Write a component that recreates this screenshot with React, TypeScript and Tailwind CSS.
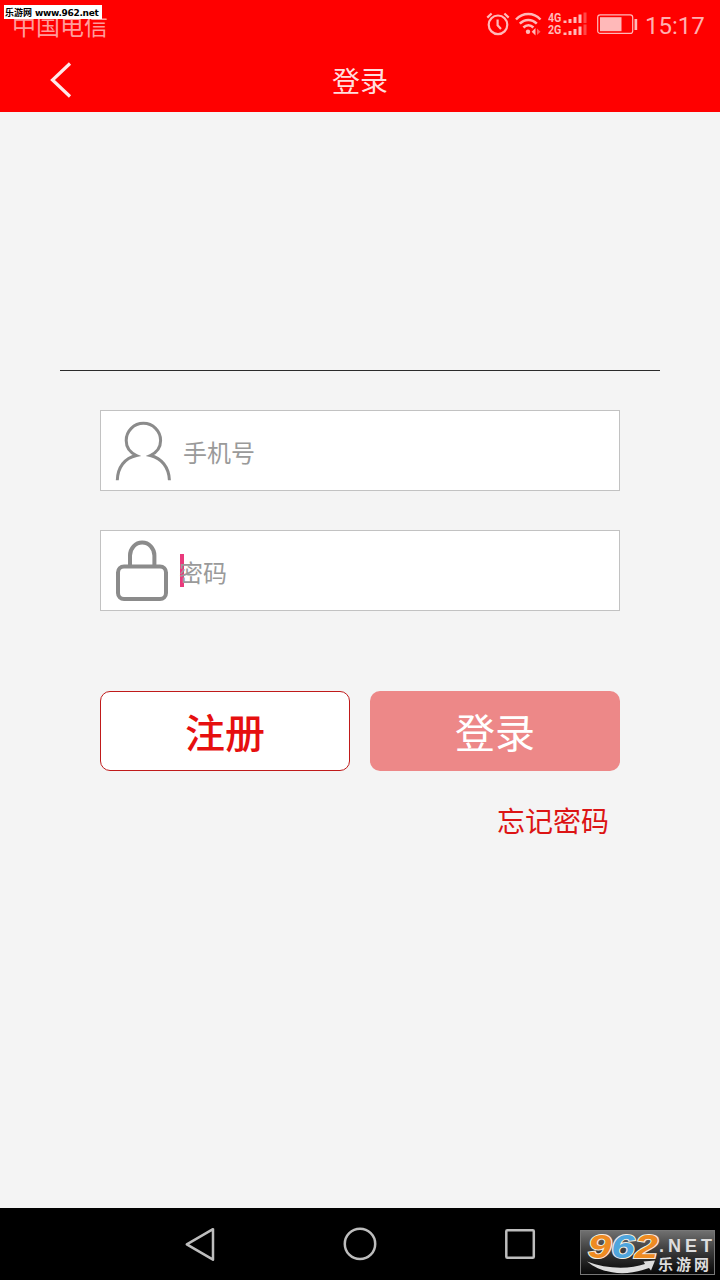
import React, { useState } from 'react';

const AlarmIcon: React.FC = () => (
  <svg className="h-[24px] w-[24px]" viewBox="0 0 24 24" fill="none" stroke="#ffb9b9" strokeWidth="2.2">
    <circle cx="12" cy="12.8" r="9.3" />
    <path d="M11.6 7.5v5.8l3.4 3.6" />
    <path d="M1.3 5.6 5.6 1.5M22.7 5.6 18.4 1.5" />
  </svg>
);

const WifiIcon: React.FC = () => (
  <svg className="h-[24px] w-[27px]" viewBox="0 0 27 24" fill="none" stroke="#ffb9b9" strokeWidth="2.5">
    <path d="M1 7.5C8 .2 18.500 .2 25.500 7.500" />
    <path d="M4.800 11.700c5-5 12-5 17 0" />
    <path d="M8.400 15.500c3-3 7-3 10 0" />
    <circle cx="13" cy="19.800" r="2.200" fill="#ffb9b9" stroke="none" />
    <path d="m20.500 16-3.800 3.800 3.800 3.800z" fill="#ffb9b9" stroke="none" />
    <path d="m22 16.500 3.500 3.300-3.500 3.300z" fill="#ff6464" stroke="none" />
  </svg>
);

const SignalRow: React.FC<{ label: string }> = ({ label }) => (
  <div className="flex h-[12px] items-center">
    <span className="w-[15px] origin-left scale-x-[.82] font-['Roboto',sans-serif] text-[13px] leading-[12px] font-bold text-[#ffb9b9]">
      {label}
    </span>
    <svg className="h-[12px] w-[24px]" viewBox="0 0 24 12">
      <path
        d="M.5 8.500h3v2.500h-3zM5.500 7h3v4h-3zM10.500 5h3v6h-3zM15.500 2.500h3V11h-3z"
        fill="#ffb9b9"
      />
      <path d="M20.500 .5h3V11h-3z" fill="#ff4848" />
    </svg>
  </div>
);

const BatteryIcon: React.FC = () => (
  <svg className="h-[21px] w-[41px]" viewBox="0 0 41 21">
    <rect x=".7" y=".9" width="35" height="18.500" rx="2.500" fill="none" stroke="#ffb9b9" strokeWidth="1.200" />
    <rect x="3" y="3.200" width="21.500" height="14" fill="#ffb9b9" />
    <path d="M37.500 5h2.700v11h-2.700z" fill="#ffb9b9" />
  </svg>
);

const UserIcon: React.FC = () => (
  <svg className="h-[60px] w-[56px] shrink-0" viewBox="0 0 56 60" fill="none" stroke="#8b8b8b" strokeWidth="3">
    <path d="M2.300 59.200C2.700 46.500 9.500 37 21.500 34.500 15 31.500 11.200 26 11.200 19.500a17.200 17.200 0 0 1 34.400 0c0 6.500-3.800 12-10.300 15C46.500 37 54 46.500 54.400 59.200" />
  </svg>
);

const LockIcon: React.FC = () => (
  <svg className="h-[62px] w-[52px] shrink-0" viewBox="0 0 52 62" fill="none" stroke="#8b8b8b" strokeWidth="4">
    <path d="M14 26V15.500a12.200 13 0 0 1 24.400 0V26" />
    <rect x="2" y="26.500" width="48" height="32.500" rx="6" />
  </svg>
);

const SiteLogo: React.FC = () => (
  <div className="absolute right-[5px] bottom-[5px] h-[45px] w-[135px] border border-[#777777] bg-linear-to-b from-[#707070] to-[#080808]">
    <svg className="h-full w-full" viewBox="0 0 133 43">
      <g
        fontFamily="Liberation Sans, sans-serif"
        fontSize="34"
        fontWeight="bold"
        fontStyle="italic"
        stroke="#f3ece0"
        strokeWidth="2"
        paintOrder="stroke"
      >
        <text x="7" y="27" textLength="70" lengthAdjust="spacingAndGlyphs">
          <tspan fill="#ee8b22">9</tspan>
          <tspan fill="#4fa5dc">6</tspan>
          <tspan fill="#ee8b22">2</tspan>
        </text>
      </g>
      <path d="M6 30.500C25 38 48 38.500 64 33l-1.500-2.500 11.500-1-4 10-2-2.500C46 45.500 22 43.500 6 30.500Z" fill="#dddddd" />
      <text
        x="78"
        y="21"
        fill="#dddddd"
        fontFamily="Liberation Sans, sans-serif"
        fontSize="18"
        fontWeight="bold"
        textLength="53"
      >
        .NET
      </text>
      <text
        x="77"
        y="39"
        fill="#dddddd"
        fontFamily="Noto Sans CJK SC, sans-serif"
        fontSize="15"
        fontWeight="bold"
        textLength="51"
      >
        乐游网
      </text>
    </svg>
  </div>
);

const App: React.FC = () => {
  const [phone, setPhone] = useState('');
  const [password, setPassword] = useState('');

  const inputClass =
    'h-full min-w-0 flex-1 bg-transparent pt-[6px] text-[24px] text-[#333333] outline-none placeholder:text-[#9a9a9a]';

  return (
    <div className="relative flex h-[1280px] w-[720px] flex-col overflow-hidden bg-[#f4f4f4] font-['Roboto','Noto_Sans_CJK_SC',sans-serif]">
      <header className="h-[112px] shrink-0 bg-[#ff0000]">
        <div className="flex h-[48px] items-center justify-between pr-[15px] pl-[12px]">
          <span className="pt-[5px] text-[24px] text-[#ff9c9c]">中国电信</span>
          <div className="flex items-center">
            <AlarmIcon />
            <div className="ml-[5px]">
              <WifiIcon />
            </div>
            <div className="ml-[6px]">
              <SignalRow label="4G" />
              <SignalRow label="2G" />
            </div>
            <div className="ml-[10px]">
              <BatteryIcon />
            </div>
            <span className="ml-[7px] w-[60px] pt-[3px] text-[24px] leading-[28px] whitespace-nowrap text-[#ffb0b0]">15:17</span>
          </div>
        </div>
        <div className="grid h-[64px] grid-cols-3 items-center">
          <button className="pl-[49px]">
            <svg className="h-[36px] w-[24px]" viewBox="0 0 24 36" fill="none" stroke="#ffe9e9" strokeWidth="3.2">
              <path d="M21 1.500 3.500 18 21 34.500" />
            </svg>
          </button>
          <h1 className="pt-[6px] text-center text-[28px] text-[#ffdede]">登录</h1>
        </div>
      </header>

      <main className="flex-1 px-[60px] pt-[258px]">
        <div className="h-px bg-[#2b2b2b]" />
        <form className="px-10 pt-[39px]" onSubmit={(e) => e.preventDefault()}>
          <label className="flex h-[81px] items-center border border-[#c2c2c2] bg-white pl-[14px]">
            <UserIcon />
            <input
              className={`${inputClass} ml-[12px]`}
              placeholder="手机号"
              value={phone}
              onChange={(e) => setPhone(e.target.value)}
            />
          </label>
          <label className="mt-[39px] flex h-[81px] items-center border border-[#c2c2c2] bg-white pl-[15px]">
            <LockIcon />
            <span className="ml-[12px] h-[33px] w-[4px] bg-[#e93a7c]" />
            <input
              className={`${inputClass} -ml-[5px]`}
              type="password"
              placeholder="密码"
              value={password}
              onChange={(e) => setPassword(e.target.value)}
            />
          </label>

          <div className="mt-[80px] grid grid-cols-2 gap-5">
            <button className="h-[80px] rounded-[10px] border-[1.5px] border-[#c01a1a] bg-white pt-[8px] text-[40px] leading-[58px] font-medium text-[#e60f0f]">
              注册
            </button>
            <button className="h-[80px] rounded-[10px] bg-[#ed8888] pt-[8px] text-[40px] leading-[58px] text-white">登录</button>
          </div>
          <div className="mt-[31px] flex justify-end pr-[11px]">
            <button className="text-[28px] text-[#dc1414]">忘记密码</button>
          </div>
        </form>
      </main>

      <nav className="flex h-[72px] shrink-0 items-center justify-center gap-[124px] bg-black">
        <svg className="h-[36px] w-[36px]" viewBox="0 0 36 36" fill="none" stroke="#bdbdbd" strokeWidth="2.500" strokeLinejoin="round">
          <path d="M31 3.200v30.500L4.800 18.300z" />
        </svg>
        <svg className="h-[36px] w-[36px]" viewBox="0 0 36 36" fill="none" stroke="#bdbdbd" strokeWidth="2.500">
          <circle cx="18" cy="17.900" r="15.200" />
        </svg>
        <svg className="h-[36px] w-[36px]" viewBox="0 0 36 36" fill="none" stroke="#bdbdbd" strokeWidth="2.500">
          <rect x="4.300" y="4.300" width="27.500" height="27.500" rx="1" />
        </svg>
      </nav>

      <div className="absolute top-[5px] left-[4px] flex h-[14px] w-[98px] items-center gap-[3px] bg-white pl-px text-[9px] leading-[14px] font-bold whitespace-nowrap text-black">
        <span className="pt-[2px] font-['Noto_Sans_CJK_SC',sans-serif]">乐游网</span>
        <span className="pt-px font-['DejaVu_Sans',sans-serif] text-[9px] tracking-[-0.3px]">www.962.net</span>
      </div>
      <SiteLogo />
    </div>
  );
};

export default App;
